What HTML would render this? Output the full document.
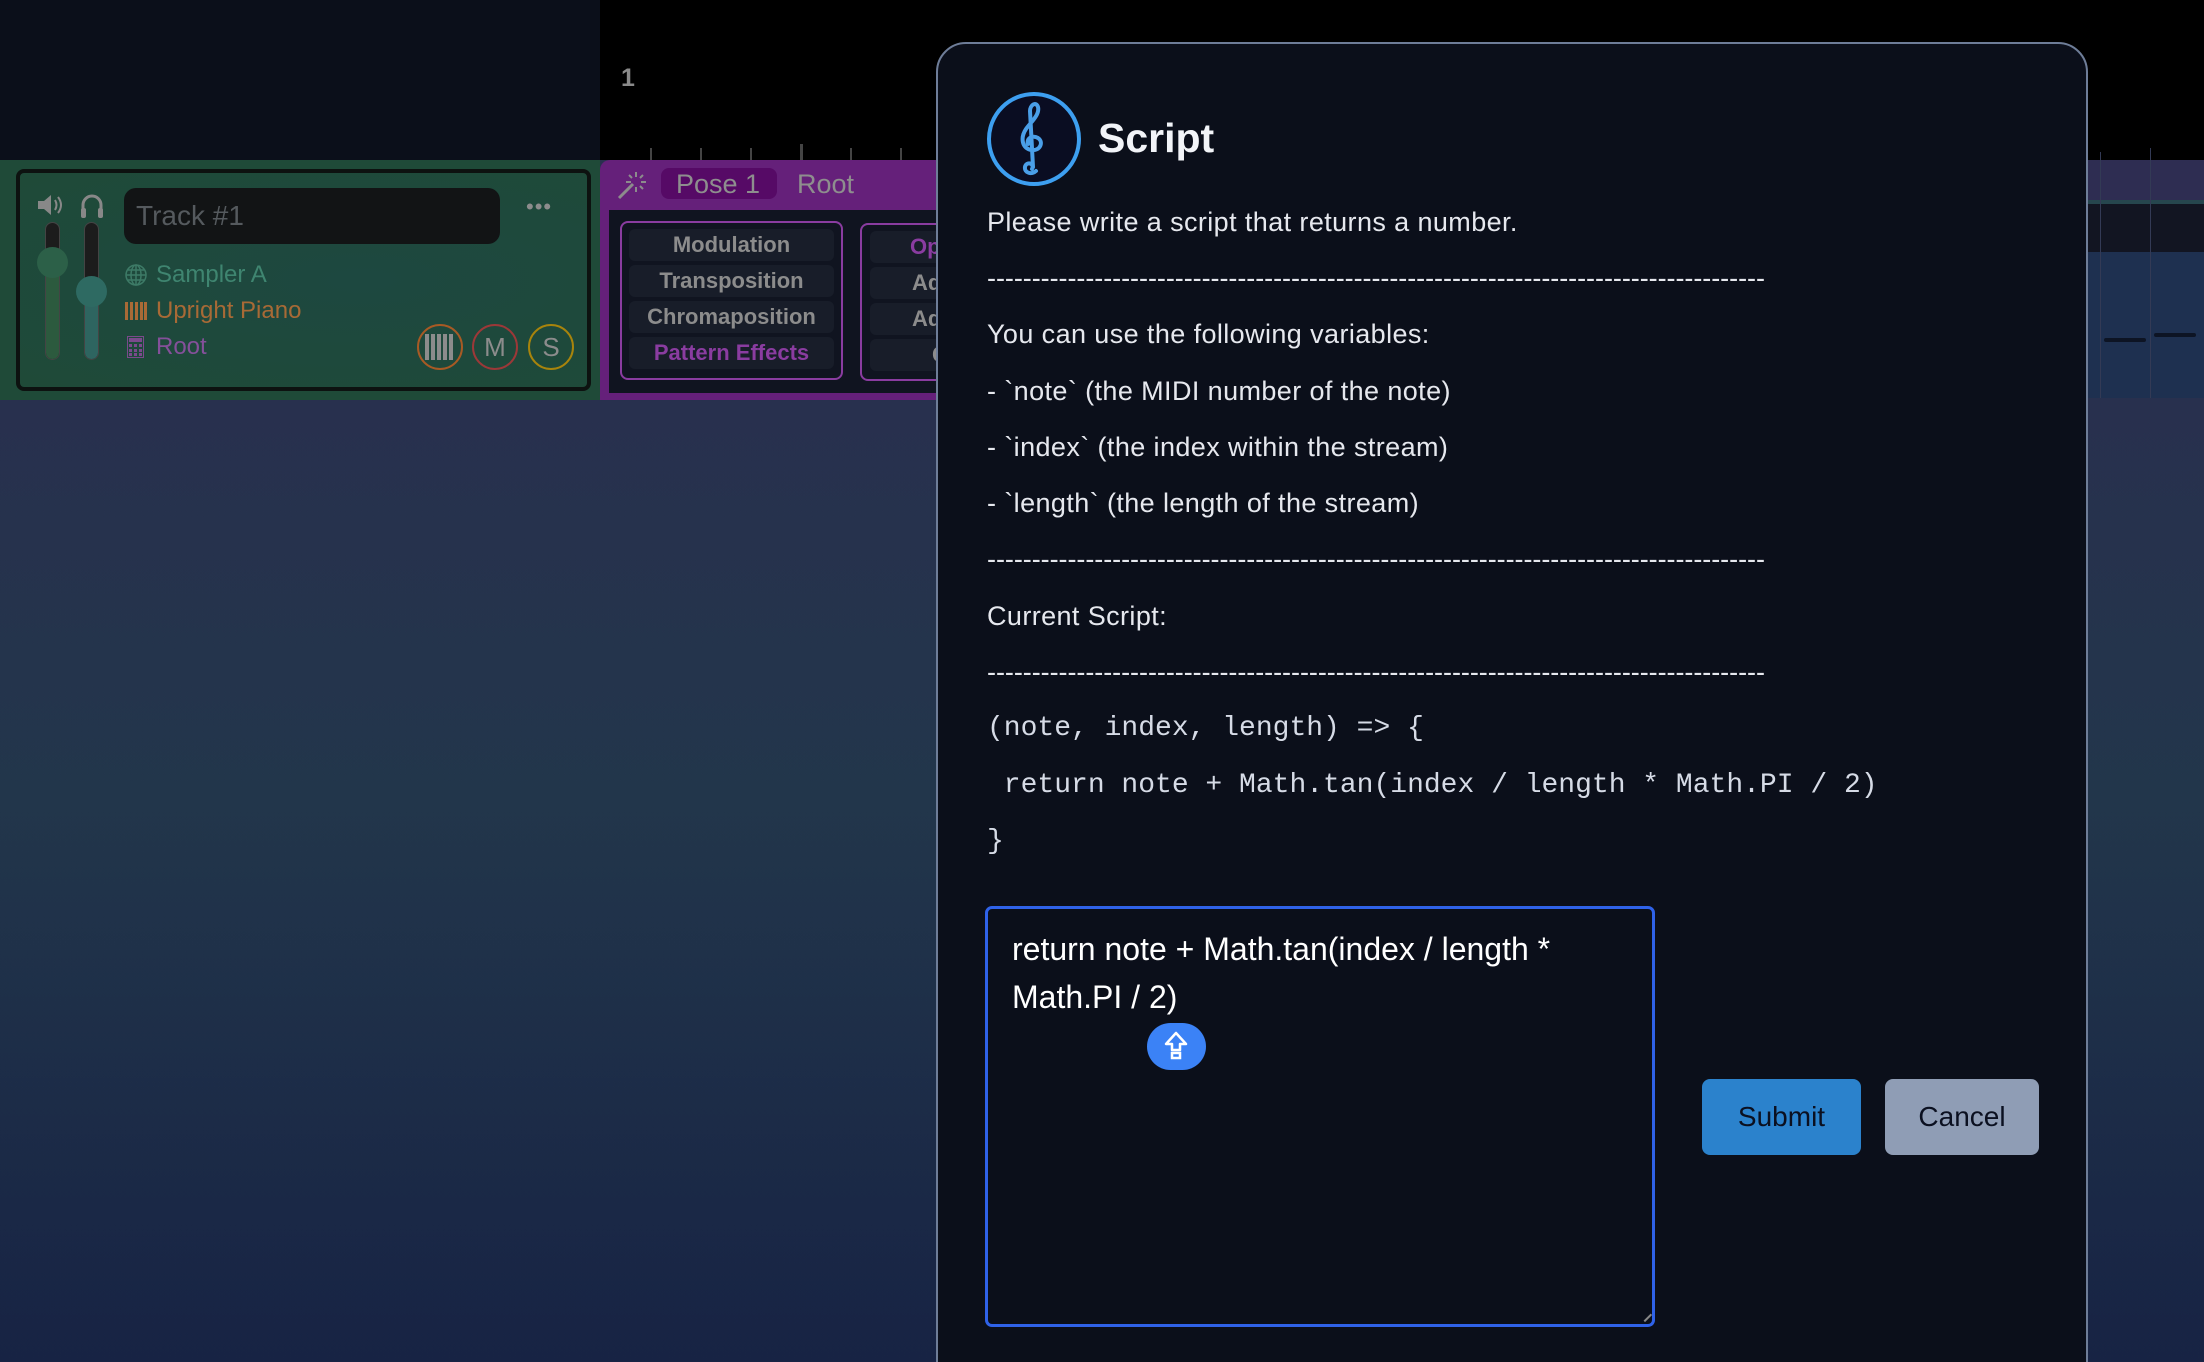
<!DOCTYPE html>
<html><head><meta charset="utf-8"><style>
*{box-sizing:border-box;margin:0;padding:0}
html{width:2204px;height:1362px;overflow:hidden}
body{width:2204px;height:1362px;overflow:hidden;position:relative;font-family:"Liberation Sans",sans-serif;background:linear-gradient(180deg,#28304e 400px,#22364b 800px,#172344 1362px)}
.a{position:absolute}
.t{position:absolute;white-space:nowrap;line-height:1}
.row{position:absolute;left:20px;width:200px;height:32px;background:#181d29;border-radius:6px;color:#8c8c8c;font-weight:bold;font-size:22px;text-align:center;line-height:32px}
.ml{position:absolute;left:987px;color:#e6e8ee;font-size:27px;white-space:nowrap;line-height:1;letter-spacing:0.4px}
.dash{letter-spacing:-0.05px}
.code{position:absolute;left:987px;color:#d6dbe6;font-family:"Liberation Mono",monospace;font-size:28px;white-space:pre;line-height:1}
</style></head><body>
<div class="a" style="left:0;top:0;width:600px;height:160px;background:#0b0f1a"></div>
<div class="a" style="left:600px;top:0;width:1604px;height:160px;background:#000"></div>
<div class="t" style="left:621px;top:66px;font-size:25px;font-weight:bold;color:#8a8a8a">1</div>
<div class="a" style="left:650px;top:148px;width:2px;height:12px;background:#444"></div>
<div class="a" style="left:700px;top:148px;width:2px;height:12px;background:#444"></div>
<div class="a" style="left:750px;top:148px;width:2px;height:12px;background:#444"></div>
<div class="a" style="left:800px;top:144px;width:3px;height:16px;background:#444"></div>
<div class="a" style="left:850px;top:148px;width:2px;height:12px;background:#444"></div>
<div class="a" style="left:900px;top:148px;width:2px;height:12px;background:#444"></div>
<div class="a" style="left:2086px;top:160px;width:118px;height:40px;background:#2e2d52"></div>
<div class="a" style="left:2086px;top:200px;width:118px;height:4px;background:#26464e"></div>
<div class="a" style="left:2086px;top:204px;width:118px;height:48px;background:#121522"></div>
<div class="a" style="left:2086px;top:252px;width:118px;height:146px;background:#1e3050"></div>
<div class="a" style="left:2100px;top:152px;width:1px;height:246px;background:#333a55"></div>
<div class="a" style="left:2150px;top:148px;width:1px;height:250px;background:#333a55"></div>
<div class="a" style="left:2104px;top:338px;width:42px;height:4px;border-radius:2px;background:#0d1424"></div>
<div class="a" style="left:2154px;top:333px;width:42px;height:4px;border-radius:2px;background:#0d1424"></div>
<div class="a" style="left:0;top:160px;width:600px;height:240px;background:#1f4a38"></div>
<div class="a" style="left:16px;top:169px;width:575px;height:222px;border:4px solid #0d1210;border-radius:8px;background:radial-gradient(ellipse at 60% 50%,#1d4840,#1f4a38)"></div>
<svg class="a" style="left:36px;top:192px" width="30" height="26" viewBox="0 0 30 26"><path d="M2 9h6l7-6v20l-7-6H2z" fill="#888"/><path d="M19 8q3 5 0 10M22 5q6 8 0 16" stroke="#888" stroke-width="2" fill="none"/></svg>
<svg class="a" style="left:79px;top:191px" width="26" height="28" viewBox="0 0 26 28"><path d="M4 22V14a9 9 0 0 1 18 0v8" stroke="#888" stroke-width="3" fill="none"/><rect x="2" y="17" width="5" height="10" rx="2" fill="#888"/><rect x="19" y="17" width="5" height="10" rx="2" fill="#888"/></svg>
<div class="a" style="left:45px;top:222px;width:15px;height:138px;border-radius:8px;background:#1c1c1c;border:1px solid #444"></div>
<div class="a" style="left:46px;top:262px;width:13px;height:97px;border-radius:0 0 7px 7px;background:#2c5a3e"></div>
<div class="a" style="left:37px;top:247px;width:31px;height:31px;border-radius:50%;background:#2c6048"></div>
<div class="a" style="left:84px;top:222px;width:15px;height:138px;border-radius:8px;background:#1c1c1c;border:1px solid #444"></div>
<div class="a" style="left:85px;top:291px;width:13px;height:68px;border-radius:0 0 7px 7px;background:#2e6560"></div>
<div class="a" style="left:76px;top:276px;width:31px;height:31px;border-radius:50%;background:#2e6a62"></div>
<div class="a" style="left:124px;top:188px;width:376px;height:56px;border-radius:12px;background:#121415"></div>
<div class="t" style="left:136px;top:202px;font-size:28px;color:#555a5e">Track #1</div>
<div class="t" style="left:526px;top:196px;font-size:22px;color:#8c8c8c;letter-spacing:1px">•••</div>
<svg class="a" style="left:125px;top:264px" width="22" height="22" viewBox="0 0 22 22"><g stroke="#3d7a66" stroke-width="1.5" fill="none"><circle cx="11" cy="11" r="10"/><ellipse cx="11" cy="11" rx="5" ry="10"/><path d="M1 11h20M3 6h16M3 16h16M11 1v20"/></g></svg>
<div class="t" style="left:156px;top:263px;font-size:24px;color:#3f8570">Sampler A</div>
<svg class="a" style="left:125px;top:302px" width="22" height="18" viewBox="0 0 22 18"><g fill="#a86a36"><rect x="0" y="0" width="3" height="18"/><rect x="5" y="0" width="3" height="18"/><rect x="10" y="0" width="3" height="18"/><rect x="15" y="0" width="3" height="18"/><rect x="19" y="0" width="3" height="18"/></g></svg>
<div class="t" style="left:156px;top:299px;font-size:24px;color:#a86a36">Upright Piano</div>
<svg class="a" style="left:127px;top:336px" width="17" height="22" viewBox="0 0 17 22"><rect x="0.5" y="0.5" width="16" height="21" fill="none" stroke="#7a4a8c"/><rect x="2" y="2" width="13" height="4" fill="#7a4a8c"/><g fill="#7a4a8c"><rect x="2" y="8" width="3" height="3"/><rect x="7" y="8" width="3" height="3"/><rect x="12" y="8" width="3" height="3"/><rect x="2" y="13" width="3" height="3"/><rect x="7" y="13" width="3" height="3"/><rect x="12" y="13" width="3" height="3"/><rect x="2" y="17" width="3" height="3"/><rect x="7" y="17" width="3" height="3"/><rect x="12" y="17" width="3" height="3"/></g></svg>
<div class="t" style="left:156px;top:335px;font-size:24px;color:#84509a">Root</div>
<div class="a" style="left:417px;top:324px;width:46px;height:46px;border-radius:50%;border:2px solid #a85a24"></div>
<svg class="a" style="left:425px;top:334px" width="30" height="26" viewBox="0 0 30 26"><g fill="#8c8c8c"><rect x="0" y="0" width="4" height="26"/><rect x="6" y="0" width="4" height="26"/><rect x="12" y="0" width="4" height="26"/><rect x="18" y="0" width="4" height="26"/><rect x="24" y="0" width="4" height="26"/></g></svg>
<div class="a" style="left:472px;top:324px;width:46px;height:46px;border-radius:50%;border:2px solid #9c3838;color:#8c8c8c;font-size:26px;text-align:center;line-height:42px">M</div>
<div class="a" style="left:528px;top:324px;width:46px;height:46px;border-radius:50%;border:2px solid #a8840c;color:#8c8c8c;font-size:26px;text-align:center;line-height:42px">S</div>
<div class="a" style="left:600px;top:160px;width:340px;height:240px;background:#65207a;border-radius:10px 0 0 0"></div>
<svg class="a" style="left:616px;top:170px" width="30" height="30" viewBox="0 0 30 30"><path d="M3 28L17 14" stroke="#8c8c8c" stroke-width="3"/><path d="M20 2v5M20 17v5M10 12h5M25 12h5M13 5l3 3M27 5l-3 3M27 19l-3-3" stroke="#8c8c8c" stroke-width="2"/></svg>
<div class="a" style="left:661px;top:168px;width:116px;height:31px;border-radius:8px;background:#560a66"></div>
<div class="t" style="left:676px;top:171px;font-size:27px;color:#8e8e8e">Pose 1</div>
<div class="t" style="left:797px;top:171px;font-size:27px;color:#8e8e8e">Root</div>
<div class="a" style="left:609px;top:210px;width:331px;height:183px;background:#101420"></div>
<div class="a" style="left:620px;top:221px;width:223px;height:159px;border:2px solid #8a3ca0;border-radius:8px">
<div class="row" style="left:7px;top:6px;width:205px">Modulation</div>
<div class="row" style="left:7px;top:42px;width:205px">Transposition</div>
<div class="row" style="left:7px;top:78px;width:205px">Chromaposition</div>
<div class="row" style="left:7px;top:114px;width:205px;color:#8a3ca0">Pattern Effects</div>
</div>
<div class="a" style="left:860px;top:223px;width:90px;height:158px;border:2px solid #8a3ca0;border-radius:8px;overflow:hidden">
<div class="row" style="left:8px;top:6px;color:#8a3ca0;text-align:left;padding-left:40px">Op</div>
<div class="row" style="left:8px;top:42px;text-align:left;padding-left:42px">Ad</div>
<div class="row" style="left:8px;top:78px;text-align:left;padding-left:42px">Ad</div>
<div class="row" style="left:8px;top:114px;text-align:left;padding-left:62px">C</div>
</div>
<div class="a" style="left:936px;top:42px;width:1152px;height:1360px;background:#0b0f1a;border:2px solid #6e7d98;border-radius:30px"></div>
<div class="a" style="left:987px;top:92px;width:94px;height:94px;border-radius:50%;border:4px solid #3d9ff0;background:#0a0d22"></div>
<svg class="a" style="left:1014px;top:101px" width="40" height="76" viewBox="0 0 40 76"><path d="M22 70c-4 4-12 2-11-4s10-4 7 2M19 66L16 10c0-6 6-10 8-4 2 8-8 16-12 22-6 9-4 20 6 21 8 1 12-8 6-12-5-3-12 0-10 6" stroke="#4a9fe8" stroke-width="4" fill="none" stroke-linecap="round"/></svg>
<div class="t" style="left:1098px;top:118px;font-size:41px;font-weight:bold;color:#f2f4f8">Script</div>
<div class="ml" style="top:209px">Please write a script that returns a number.</div>
<div class="ml dash" style="top:265px">---------------------------------------------------------------------------------------</div>
<div class="ml" style="top:321px">You can use the following variables:</div>
<div class="ml" style="top:378px">- `note` (the MIDI number of the note)</div>
<div class="ml" style="top:434px">- `index` (the index within the stream)</div>
<div class="ml" style="top:490px">- `length` (the length of the stream)</div>
<div class="ml dash" style="top:546px">---------------------------------------------------------------------------------------</div>
<div class="ml" style="top:603px">Current Script:</div>
<div class="ml dash" style="top:659px">---------------------------------------------------------------------------------------</div>
<div class="code" style="top:715px">(note, index, length) => {</div>
<div class="code" style="top:772px"> return note + Math.tan(index / length * Math.PI / 2)</div>
<div class="code" style="top:828px">}</div>
<div class="a" style="left:985px;top:906px;width:670px;height:421px;border:3px solid #2f62e8;border-radius:7px;background:#0b0f1a"></div>
<div class="t" style="left:1012px;top:925px;font-size:32px;color:#fff;line-height:48px">return note + Math.tan(index / length *<br>Math.PI / 2)</div>
<div class="a" style="left:1147px;top:1023px;width:59px;height:47px;border-radius:24px;background:#3b82f6"></div>
<svg class="a" style="left:1163px;top:1030px" width="26" height="32" viewBox="0 0 26 32"><path d="M13 3L3 14h6v6h8v-6h6z" stroke="#fff" stroke-width="2.5" fill="none" stroke-linejoin="round"/><rect x="9" y="23" width="8" height="5" stroke="#fff" stroke-width="2.5" fill="none"/></svg>
<div class="a" style="left:1640px;top:1310px;width:10px;height:10px;border-right:2px solid #888;transform:rotate(45deg)"></div>
<div class="a" style="left:1702px;top:1079px;width:159px;height:76px;border-radius:8px;background:#2b82cc;color:#0b1020;font-size:28px;text-align:center;line-height:76px">Submit</div>
<div class="a" style="left:1885px;top:1079px;width:154px;height:76px;border-radius:8px;background:#8f9db5;color:#0b1020;font-size:28px;text-align:center;line-height:76px">Cancel</div>
</body></html>
